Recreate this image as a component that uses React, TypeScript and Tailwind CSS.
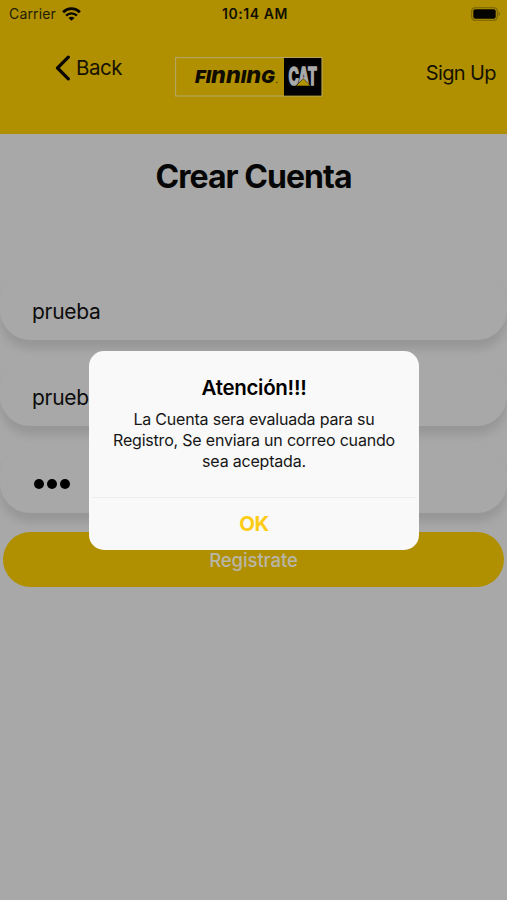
import type { ReactNode } from 'react';

function StatusBar() {
  return (
    <div className="flex h-[27px] items-center justify-between pl-[9px] pr-[6px] text-[14px]">
      <div className="flex flex-1 items-center gap-[6px]">
        <span className="tracking-[0.15px] text-[#211c05]">Carrier</span>
        <svg width="19" height="14" viewBox="0 0 19 14" fill="none" stroke="#080700">
          <path d="M1.1 5.3C5.9.5 13.1.5 17.9 5.3" strokeWidth="2.8" />
          <path d="M4.1 8.6c3-3 7.8-3 10.8 0" strokeWidth="2.4" />
          <path d="M9.5 13.8 6.5 10.9c1.8-1.5 4.2-1.5 6 0Z" fill="#080700" stroke="none" />
        </svg>
      </div>
      <span className="font-semibold tracking-[0.55px] text-[#120f02]">10:14 AM</span>
      <div className="flex flex-1 justify-end">
        <svg width="30" height="14" viewBox="0 0 30 14">
          <rect x=".7" y=".7" width="25.6" height="12.6" rx="3.6" fill="none" stroke="#736008" strokeWidth="1.1" />
          <rect x="2.3" y="2.3" width="22.4" height="9.4" rx="2" fill="#050400" />
          <path d="M27.7 4.8v4.4c1.7-.6 1.7-3.8 0-4.4Z" fill="#736008" />
        </svg>
      </div>
    </div>
  );
}

function Logo() {
  return (
    <svg width="148" height="40" viewBox="0 0 148 40">
      <rect x=".6" y=".6" width="146.4" height="38.4" fill="none" stroke="#b3a668" strokeWidth="1.1" />
      <rect x="109" y="1" width="37.4" height="37.6" fill="#020202" />
      <text x="20" y="26" textLength="80" lengthAdjust="spacingAndGlyphs" fontSize="18" fontWeight="900" fontStyle="italic" fontFamily="Inter, sans-serif" fill="#100d00">
        FI<tspan fontSize="23" fontWeight="800">nn</tspan>I<tspan fontSize="23" fontWeight="800">n</tspan>G
      </text>
      <circle cx="101.8" cy="25.4" r=".7" fill="#3c3000" />
      <text transform="translate(113.6 28) scale(.58 1)" fontSize="24" fontWeight="700" fontFamily="Inter, sans-serif" fill="#aaaaaa" stroke="#aaaaaa" strokeWidth="1.7">
        CAT
      </text>
      <path d="M121 28.9 128.3 21.6 135.6 28.9Z" fill="#b49300" stroke="#020202" strokeWidth=".5" />
    </svg>
  );
}

function Field({ children }: { children: ReactNode }) {
  return (
    <div className="flex h-[66.5px] items-center rounded-[30px] bg-[#a8a8a8] pl-[32px] pt-[10px] shadow-[0_9px_9px_rgba(0,0,0,0.1)]">
      {children}
    </div>
  );
}

function Alert() {
  return (
    <div className="absolute left-[89px] top-[351px] flex h-[199px] w-[330px] flex-col rounded-[15px] bg-[#f9f9f9] text-center">
      <div className="flex h-[146px] flex-col items-center pt-[24px]">
        <h2 className="text-[20.5px] font-semibold leading-[26px] tracking-[-0.3px] text-black">Atención!!!</h2>
        <p className="mt-[8px] whitespace-nowrap text-[16px] leading-[20.8px] tracking-[-0.2px] text-[#161616]">
          La Cuenta sera evaluada para su
          <br />
          Registro, Se enviara un correo cuando
          <br />
          sea aceptada.
        </p>
      </div>
      <div className="mx-[3px] border-t border-[#eeeeee]" />
      <button className="flex flex-1 items-center justify-center text-[20.5px] font-bold tracking-[-0.5px] text-[#fccc17]">OK</button>
    </div>
  );
}

export default function App() {
  return (
    <div className="relative flex h-[900px] w-[507px] flex-col overflow-hidden bg-[#a8a8a8] font-['Inter',sans-serif] text-[#0c0c0c]">
      <header className="h-[134px] bg-[#b09000]">
        <StatusBar />
        <div className="flex items-start justify-between pl-[55px] pr-[11px] pt-[27px] text-[20.5px] leading-[28px] text-[#151202]">
          <div className="flex w-[120px] items-center gap-[6px]">
            <svg width="15" height="26" viewBox="0 0 15 26" fill="none" stroke="#090700" strokeWidth="3.2" strokeLinecap="round" strokeLinejoin="round">
              <path d="M13.3 2.2 2.5 13l10.8 10.8" />
            </svg>
            <span className="tracking-[-0.5px]">Back</span>
          </div>
          <div className="mt-[3px]">
            <Logo />
          </div>
          <span className="mt-[5px] flex w-[173px] justify-end text-[20px] tracking-[-0.6px]">Sign Up</span>
        </div>
      </header>
      <h1 className="mt-[23px] text-center text-[32px] font-bold leading-[40px] tracking-[-0.95px] text-[#060606]">Crear Cuenta</h1>
      <main className="mt-[76px] flex flex-col gap-[20px] text-[21px] tracking-[-0.3px]">
        <Field>prueba</Field>
        <Field>prueba</Field>
        <Field>
          <div className="flex gap-[3.2px] pl-[1.5px]">
            <i className="size-[10px] rounded-full bg-black" />
            <i className="size-[10px] rounded-full bg-black" />
            <i className="size-[10px] rounded-full bg-black" />
          </div>
        </Field>
        <button className="mx-[3px] -mt-[0.5px] h-[55px] rounded-full bg-[#b09000] pt-[2px] text-[18.5px] font-medium tracking-[-0.1px] text-[#b9b6a8]">
          Registrate
        </button>
      </main>
      <Alert />
    </div>
  );
}
